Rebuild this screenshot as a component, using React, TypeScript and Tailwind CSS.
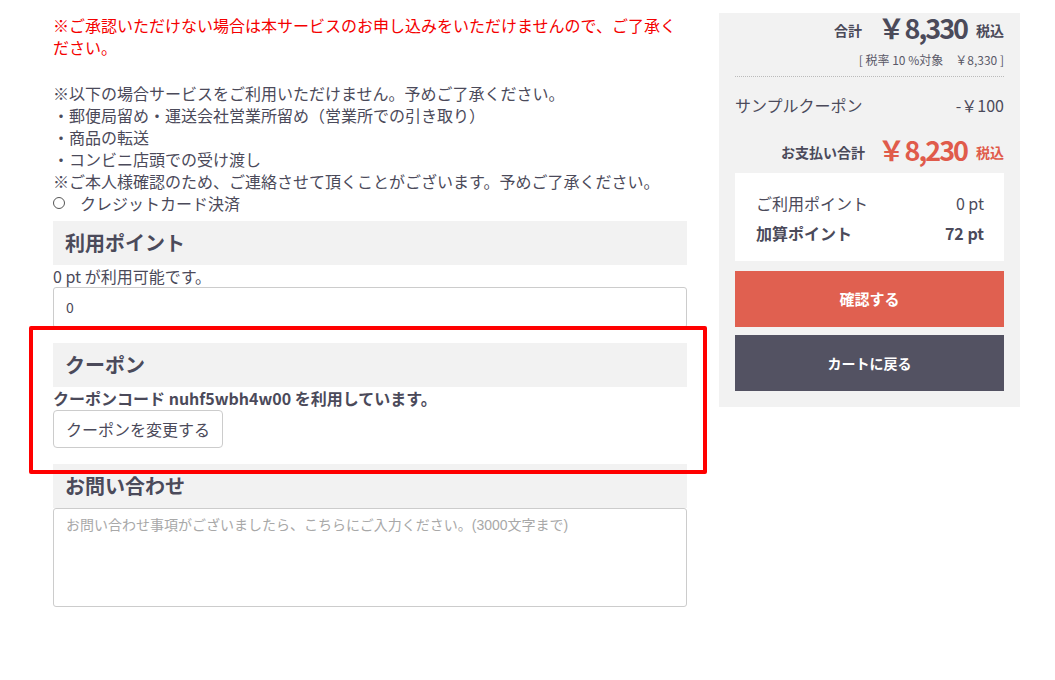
import React from "react";

const font = { fontFamily: '"Noto Sans CJK JP", "Noto Sans", sans-serif' };

function SectionHeader({ title }: { title: string }) {
  return (
    <div className="h-[44px] bg-[#f2f2f2] pl-3 flex items-center">
      <h2 className="text-[20px] font-bold text-[#4b4a5a] leading-none">{title}</h2>
    </div>
  );
}

function Price({ value, red }: { value: string; red?: boolean }) {
  return (
    <span
      className={
        "text-[27px] leading-none font-bold -mt-[3px] " + (red ? "text-[#e05b4b]" : "text-[#4b4a5a]")
      }
    >
      <span className="tracking-[-0.5px]">￥</span>
      <span className="tracking-[-2px]">{value}</span>
    </span>
  );
}

export default function App() {
  return (
    <div className="relative min-h-[680px] bg-white text-[#4b4a5a]" style={font}>
      <div className="flex gap-8 pl-[53px] pt-[13px]">
        {/* 左カラム */}
        <div className="w-[634px] shrink-0">
          <div className="pt-px text-[16px] leading-[22px]">
            <p className="text-[#f40000]">
              ※ご承認いただけない場合は本サービスのお申し込みをいただけませんので、ご了承ください。
            </p>
            <p className="h-[24px]" />
            <p>※以下の場合サービスをご利用いただけません。予めご了承ください。</p>
            <p>・郵便局留め・運送会社営業所留め（営業所での引き取り）</p>
            <p>・商品の転送</p>
            <p>・コンビニ店頭での受け渡し</p>
            <p>※ご本人様確認のため、ご連絡させて頂くことがございます。予めご了承ください。</p>
          </div>
          <label className="flex items-center h-[22px] text-[16px] mb-[7px]">
            <span className="w-[12px] h-[12px] rounded-full border border-[#555] bg-white" />
            <span className="ml-[15px]">クレジットカード決済</span>
          </label>

          <SectionHeader title="利用ポイント" />
          <p className="text-[16px] leading-[22px]">0 pt が利用可能です。</p>
          <div className="h-[41px] border border-[#ccc] rounded-[3px] flex items-center px-3 text-[14px]">
            0
          </div>

          <div className="mt-[15px]">
            <SectionHeader title="クーポン" />
            <p className="text-[16px] leading-[23px] font-bold">
              クーポンコード nuhf5wbh4w00 を利用しています。
            </p>
            <button className="h-[38px] px-3 border border-[#ccc] rounded-[4px] bg-white text-[16px] text-[#4b4a5a]">
              クーポンを変更する
            </button>
          </div>

          <div className="mt-[16px]">
            <SectionHeader title="お問い合わせ" />
            <textarea
              className="block w-full h-[99px] border border-[#ccc] rounded-[3px] px-3 py-[6px] text-[14px] resize-none placeholder:text-[#a8a8a8]"
              style={{ fontFamily: '"Liberation Sans", "Noto Sans CJK JP", sans-serif' }}
              placeholder="お問い合わせ事項がございましたら、こちらにご入力ください。(3000文字まで)"
            />
          </div>
        </div>

        {/* 右カラム */}
        <div className="w-[301px] shrink-0 self-start bg-[#f2f2f2] px-4 pb-4">
          <div className="flex items-center justify-end h-[32px]">
            <span className="text-[14px] font-bold mt-[2px] mr-[16px]">合計</span>
            <Price value="8,330" />
            <span className="ml-[9px] text-[14px] font-bold mt-[2px]">税込</span>
          </div>
          <div className="mt-[4px] text-right text-[12px] leading-[22px] text-[#5a5968]">
            [ 税率 10 %対象　￥8,330 ]
          </div>
          <div className="mt-[5px] border-t border-dotted border-[#bbb]" />
          <div className="flex justify-between items-center mt-[16px] h-[24px] text-[16px]">
            <span>サンプルクーポン</span>
            <span>-￥100</span>
          </div>
          <div className="flex items-center justify-end h-[36px] mt-[16px]">
            <span className="text-[14px] font-bold mt-[2px] mr-[13px]">お支払い合計</span>
            <Price value="8,230" red />
            <span className="ml-[9px] text-[14px] font-bold text-[#e05b4b] mt-[2px]">税込</span>
          </div>
          <div className="mt-[4px] bg-white pl-[21px] pr-[20px] pt-[15px] pb-[13px] text-[16px]">
            <div className="flex justify-between h-[30px] items-center">
              <span>ご利用ポイント</span>
              <span>0 pt</span>
            </div>
            <div className="flex justify-between h-[30px] items-center font-bold">
              <span>加算ポイント</span>
              <span>72 pt</span>
            </div>
          </div>
          <button className="mt-[10px] w-full h-[56px] bg-[#e06050] text-white font-bold text-[15px]">
            確認する
          </button>
          <button className="mt-[8px] w-full h-[56px] bg-[#535262] text-white font-bold text-[14px]">
            カートに戻る
          </button>
        </div>
      </div>

      {/* 注記の赤枠 */}
      <div className="absolute left-[29px] top-[326px] w-[678px] h-[148px] border-4 border-[#ff0000] rounded-[2px] pointer-events-none" />
    </div>
  );
}
